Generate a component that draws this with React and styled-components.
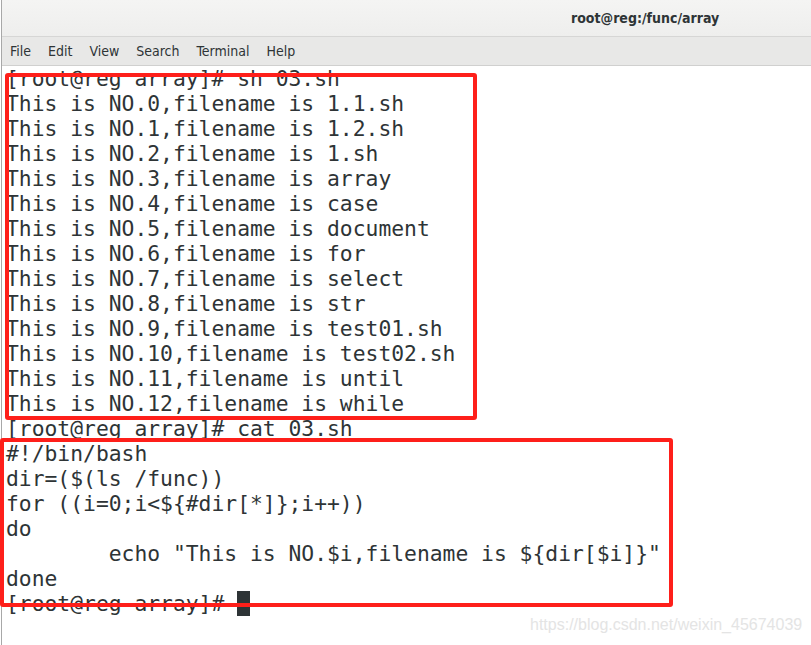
import React from 'react';
import styled, { createGlobalStyle } from 'styled-components';

const lines = [
  '[root@reg array]# sh 03.sh',
  'This is NO.0,filename is 1.1.sh',
  'This is NO.1,filename is 1.2.sh',
  'This is NO.2,filename is 1.sh',
  'This is NO.3,filename is array',
  'This is NO.4,filename is case',
  'This is NO.5,filename is document',
  'This is NO.6,filename is for',
  'This is NO.7,filename is select',
  'This is NO.8,filename is str',
  'This is NO.9,filename is test01.sh',
  'This is NO.10,filename is test02.sh',
  'This is NO.11,filename is until',
  'This is NO.12,filename is while',
  '[root@reg array]# cat 03.sh',
  '#!/bin/bash',
  'dir=($(ls /func))',
  'for ((i=0;i<${#dir[*]};i++))',
  'do',
  '        echo "This is NO.$i,filename is ${dir[$i]}"',
  'done',
];

const menus = ['File', 'Edit', 'View', 'Search', 'Terminal', 'Help'];

const App = () => {
  return (
    <Page>
      <GlobalStyle />
      <Window>
        <TitleBar>
          <Title>root@reg:/func/array</Title>
        </TitleBar>
        <MenuBar>
          {menus.map(m => (
            <MenuItem key={m}>{m}</MenuItem>
          ))}
        </MenuBar>
        <Terminal>
          {lines.map((l, i) => (
            <Line key={i}>{l}</Line>
          ))}
          <Line>
            {'[root@reg array]# '}
            <Cursor />
          </Line>
        </Terminal>
      </Window>
      <Mark $left={5} $top={73} $width={472} $height={347} />
      <Mark $left={0} $top={438} $width={673} $height={169} />
      <Watermark>https://blog.csdn.net/weixin_45674039</Watermark>
    </Page>
  );
};
export default App;

const GlobalStyle = createGlobalStyle`
  html, body {
    margin: 0;
    padding: 0;
    background: #ffffff;
  }
`;

const Page = styled.div`
  position: relative;
  width: 811px;
  height: 645px;
  overflow: hidden;
  background: #ffffff;
`;

const Window = styled.div`
  display: flex;
  flex-direction: column;
  height: 645px;
  margin-left: 1px;
  border-left: 1px solid #a8a8a8;
`;

const TitleBar = styled.div`
  height: 36px;
  display: flex;
  align-items: center;
  padding-left: 569px;
  background: linear-gradient(to bottom, #f4f4f3, #eeeeed);
  border-bottom: 1px solid #d6d6d5;
`;

const Title = styled.span`
  font-family: 'DejaVu Sans Condensed', 'DejaVu Sans', sans-serif;
  font-size: 14px;
  font-weight: bold;
  color: #2e3436;
`;

const MenuBar = styled.div`
  height: 28px;
  display: flex;
  align-items: center;
  gap: 17px;
  padding-left: 8px;
  background: #e8e8e7;
  border-bottom: 1px solid #d0d0cf;
`;

const MenuItem = styled.span`
  font-family: 'DejaVu Sans Condensed', 'DejaVu Sans', sans-serif;
  font-size: 14px;
  color: #2e3436;
`;

const Terminal = styled.div`
  flex: 1;
  padding-left: 4px;
  background: #ffffff;
  font-family: 'DejaVu Sans Mono', monospace;
  font-size: 21.33px;
  line-height: 25px;
  color: #2e3436;
`;

const Line = styled.div`
  height: 25px;
  white-space: pre;
  display: flex;
  align-items: center;
`;

const Cursor = styled.span`
  display: inline-block;
  width: 13px;
  height: 25px;
  background: #2e3436;
`;

const Mark = styled.div`
  position: absolute;
  left: ${p => p.$left}px;
  top: ${p => p.$top}px;
  width: ${p => p.$width}px;
  height: ${p => p.$height}px;
  box-sizing: border-box;
  border: 4px solid #fe1f1a;
  border-radius: 3px;
`;

const Watermark = styled.div`
  position: absolute;
  left: 530px;
  top: 616px;
  font-family: 'Liberation Sans', Arial, sans-serif;
  font-size: 16px;
  color: #e4e4e4;
`;
